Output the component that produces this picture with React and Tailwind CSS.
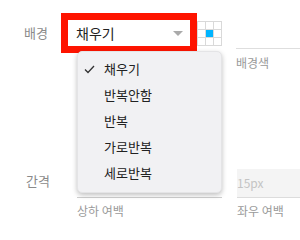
export default function App() {
  const items = ["채우기", "반복안함", "반복", "가로반복", "세로반복"];
  return (
    <div
      className="relative w-[300px] h-[240px] overflow-hidden bg-white"
      style={{ fontFamily: '"Noto Sans CJK KR", "Noto Sans", sans-serif' }}
    >
      <div className="flex flex-col pt-[13px]">
        {/* Row 1 */}
        <div className="flex items-start">
          <div className="shrink-0 w-[61px] pl-[24px] h-[40px] flex items-center text-[13px] text-[#8a8a8a]">
            배경
          </div>
          <div className="shrink-0 w-[136px] h-[40px] border-[7px] border-[#fe1400] bg-white flex items-center justify-between pl-[8px] pr-[7px]">
            <span className="text-[14px] text-[#222]">채우기</span>
            <span className="w-0 h-0 border-l-[5px] border-r-[5px] border-t-[5px] border-l-transparent border-r-transparent border-t-[#aaa]" />
          </div>
          <div className="shrink-0 mt-[8px] grid grid-cols-[8px_8px_8px] grid-rows-[8px_8px_8px] w-[25px] h-[25px] border-t border-l border-[#d9d9d9]">
            {Array.from({ length: 9 }).map((_, i) => (
              <div
                key={i}
                className={
                  i === 4
                    ? "border-r border-b border-[#d9d9d9] bg-[#00b4ff]"
                    : "border-r border-b border-[#d9d9d9]"
                }
              />
            ))}
          </div>
          <div className="ml-[14px] flex-1 flex flex-col">
            <div className="mt-[35px] h-px bg-[#dedede]" />
            <div className="mt-[7px] text-[12px] text-[#9a9a9a] leading-[14px]">배경색</div>
          </div>
        </div>

        {/* Row 2 */}
        <div className="mt-[97px] flex items-end">
          <div className="shrink-0 w-[77px] pl-[26px] h-[28px] mb-[3px] flex items-center text-[13px] text-[#8a8a8a]">
            간격
          </div>
          <div className="shrink-0 w-[145px] h-[29px] border-b border-[#cfcfcf]" />
          <div className="ml-[15px] flex-1 h-[29px] bg-[#f4f4f4] border-b border-[#dcdcdc] flex items-center text-[12px] text-[#c4c4c4]">
            15px
          </div>
        </div>
        <div className="flex mt-[6px] text-[12px] leading-[14px] text-[#9a9a9a]">
          <div className="ml-[77px] w-[160px]">상하 여백</div>
          <div>좌우 여백</div>
        </div>
      </div>

      {/* Dropdown menu */}
      <div className="absolute left-[77px] top-[51px] w-[145px] h-[142px] rounded-[5px] bg-[#f1f1f3] border border-[#e4e4e6] shadow-[0_2px_5px_rgba(0,0,0,0.25)] pt-[4px]">
        {items.map((t, i) => (
          <div key={t} className="h-[26px] flex items-center text-[13px] text-[#222]">
            <span className="w-[26px] pl-[6px] flex items-center">
              {i === 0 && (
                <svg width="11" height="9" viewBox="0 0 11 9" fill="none">
                  <path d="M1 4.5 L4 7.5 L10 1" stroke="#333" strokeWidth="1.3" />
                </svg>
              )}
            </span>
            <span>{t}</span>
          </div>
        ))}
      </div>
    </div>
  );
}
